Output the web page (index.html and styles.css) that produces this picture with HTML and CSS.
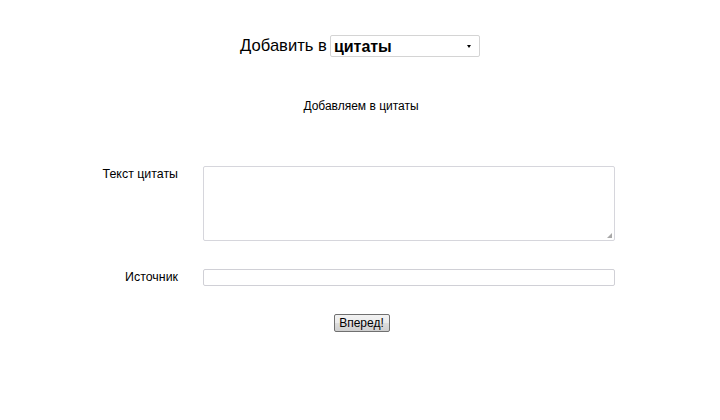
FILE: index.html
```html
<!DOCTYPE html>
<html lang="ru">
<head>
<meta charset="utf-8">
<title>Добавить в цитаты</title>
<link rel="stylesheet" href="styles.css">
</head>
<body>
<div class="page">
  <h1 class="title">Добавить в
    <span class="select-wrap">
      <select class="section-select">
        <option>цитаты</option>
      </select>
    </span>
  </h1>
  <p class="subtitle">Добавляем в цитаты</p>
  <form class="quote-form">
    <label class="label" for="q">Текст цитаты</label>
    <div class="textarea-wrap">
      <textarea id="q" class="textarea"></textarea>
    </div>
    <label class="label" for="s">Источник</label>
    <input id="s" class="input" type="text">
    <div class="actions">
      <button type="button" class="btn">Вперед!</button>
    </div>
  </form>
</div>
</body>
</html>
```
FILE: styles.css
```css
html, body {
  margin: 0;
  padding: 0;
  background: #fff;
}
body {
  font-family: "Liberation Sans", Arial, sans-serif;
  color: #000;
}
.page {
  width: 720px;
  padding-top: 35px;
}
.title {
  margin: 0;
  display: flex;
  justify-content: center;
  align-items: center;
  gap: 3px;
  font-size: 16.6px;
  font-weight: normal;
  height: 22px;
}
.select-wrap {
  position: relative;
  display: block;
  width: 150px;
  height: 22px;
}
.section-select {
  appearance: none;
  -webkit-appearance: none;
  width: 150px;
  height: 22px;
  margin: 0;
  border: 1px solid #d4d4d4;
  border-radius: 2px;
  background: #fff;
  font-family: "Liberation Sans", Arial, sans-serif;
  font-size: 16px;
  font-weight: bold;
  padding: 0 0 0 3px;
  color: #000;
}
.select-wrap::after {
  content: "";
  position: absolute;
  right: 9px;
  top: 10px;
  border-left: 2px solid transparent;
  border-right: 2px solid transparent;
  border-top: 3px solid #000;
}
.subtitle {
  margin: 41px 0 0;
  text-align: center;
  font-size: 12px;
  line-height: 16px;
  padding-left: 2px;
}
.quote-form {
  margin-top: 52px;
  display: grid;
  grid-template-columns: 178px 412px 1fr;
  column-gap: 25px;
  row-gap: 28px;
  align-items: start;
}
.label {
  grid-column: 1;
  text-align: right;
  font-size: 12.4px;
  line-height: 15px;
  padding-top: 1px;
}
.textarea-wrap,
.input {
  grid-column: 2;
}
.textarea-wrap {
  position: relative;
  width: 412px;
  height: 75px;
}
.textarea-wrap::after {
  content: "";
  position: absolute;
  right: 3px;
  bottom: 3px;
  width: 5px;
  height: 5px;
  background:
    radial-gradient(circle, #a8a8a8 0.8px, transparent 0.9px) 0 0 / 2px 2px;
  clip-path: polygon(100% 0, 100% 100%, 0 100%);
  pointer-events: none;
}
.textarea {
  display: block;
  box-sizing: border-box;
  width: 412px;
  height: 75px;
  margin: 0;
  border: 1px solid #d6d6dc;
  border-radius: 2px;
  resize: none;
}
.input {
  box-sizing: border-box;
  width: 412px;
  height: 17px;
  margin: 0;
  border: 1px solid #d0d0d6;
  border-radius: 2px;
}
.actions {
  grid-column: 1 / -1;
  display: flex;
  justify-content: center;
  padding-left: 3px;
}
.btn {
  box-sizing: border-box;
  width: 56px;
  height: 18px;
  padding: 0;
  border: 1px solid #707070;
  border-radius: 2px;
  background: linear-gradient(#f2f2f2, #ebebeb 50%, #dddddd 51%, #cfcfcf);
  font-family: "Liberation Sans", Arial, sans-serif;
  font-size: 12px;
  color: #000;
}
```
